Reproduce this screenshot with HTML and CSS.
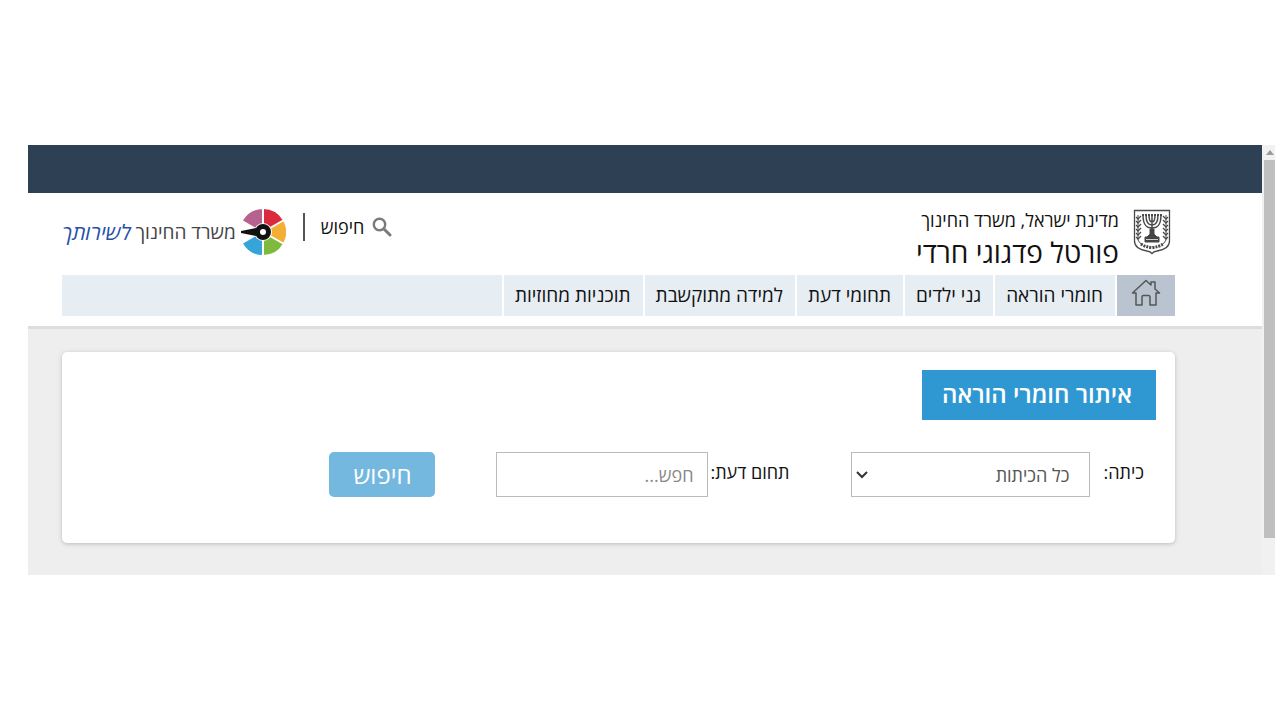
FILE: index.html
```html
<!DOCTYPE html>
<html lang="he" dir="rtl">
<head>
  <meta charset="UTF-8" />
  <meta name="viewport" content="width=device-width, initial-scale=1.0"/>
  <title>פורטל פדגוגי חרדי</title>
  <link rel="stylesheet" href="styles.css">
</head>
<body>
  <div class="frame">
    <div class="scrollbar">
      <div class="scroll-arrow"></div>
      <div class="scroll-thumb"></div>
    </div>

    <div class="page">
      <div class="top-bar"></div>

      <header class="header">
        <div class="brand-row">
          <svg class="emblem" viewBox="0 0 38 46" fill="none" stroke="#4a4a4a">
            <path d="M1.500 1.500H36.500V32C36.500 38 30 41 24 42Q20.500 42.500 19 44.500Q17.500 42.500 14 42C8 41 1.500 38 1.500 32Z" stroke-width="1.300"/>
            <path d="M10 6C10 17 14 19 19 19S28 17 28 6M13 6C13 13 15 16 19 16S25 13 25 6M16 6C16 10 17 13 19 13S22 10 22 6M19 6V27" stroke-width="1.500"/>
            <path d="M9 6H29" stroke-width="2" stroke-dasharray="2 1"/>
            <path d="M17 20H21V25L24 28H26V33H12V28H14L17 25Z" fill="#444"/>
            <path d="M13 30.500H25" stroke="#ccc"/>
            <path d="M5 6V31Q6 34 10 36M33 6V31Q32 34 28 36" stroke-width="1"/>
            <path d="M3 8L5 10L8 7M3 12L5 14L8 11M3 16L5 18L8 15M3 20L5 22L8 19M3 24L5 26L8 23M3 28L5 30L8 27M30 7L33 10L35 8M30 11L33 14L35 12M30 15L33 18L35 16M30 19L33 22L35 20M30 23L33 26L35 24M30 27L33 30L35 28" stroke-width="1.300"/>
            <path d="M8 35Q12 38 19 38.500Q26 38 30 35" stroke-width="3" stroke-dasharray="2 1"/>
          </svg>
          <div class="titles">
            <p class="subtitle">מדינת ישראל, משרד החינוך</p>
            <h1>פורטל פדגוגי חרדי</h1>
          </div>
          <a class="search-link" href="#">
            <svg class="search-icon" viewBox="0 0 20 20" fill="none" stroke="#7b7b7b">
              <circle cx="7.500" cy="7.500" r="5.700" stroke-width="2.400"/>
              <path d="M12 12L18 18" stroke-width="3" stroke-linecap="round"/>
            </svg>
            <span>חיפוש</span>
          </a>
          <a class="ministry" href="#">
            <svg class="ministry-icon" viewBox="0 0 45 48">
              <path d="M22 24V1A23 23 0 0 1 42 12.500Z" fill="#d92b3c"/>
              <path d="M22 24L42 12.500A23 23 0 0 1 42 35.500Z" fill="#f4ae35"/>
              <path d="M22 24L42 35.500A23 23 0 0 1 22 47Z" fill="#7fba3f"/>
              <path d="M22 24V47A23 23 0 0 1 2 35.500Z" fill="#35a5d9"/>
              <path d="M22 24L2 12.500A23 23 0 0 1 22 1Z" fill="#b7618f"/>
              <path d="M22 0V48M22 24L43 12M22 24L43 36" stroke="#fff" stroke-width="2"/>
              <circle cx="22" cy="24" r="9" fill="#fff"/>
              <path d="M0 23L15 20V28L0 25Z" fill="#111"/>
              <circle cx="22" cy="24" r="5.500" fill="#fff" stroke="#111" stroke-width="5"/>
            </svg>
            <span>משרד החינוך</span>
            <em>לשירותך</em>
          </a>
        </div>

        <nav class="nav">
          <a class="home" href="#" aria-label="דף הבית">
            <svg class="home-icon" viewBox="0 0 30 28" fill="none" stroke="#555" stroke-width="1.500" stroke-linejoin="round">
              <path d="M5 14H1.500L15 1.500L20 6V3H24V10L28.500 14H25V26H19V18Q19 16.500 17.500 16.500H12.500Q11 16.500 11 18V26H5Z"/>
            </svg>
          </a>
          <a href="#">חומרי הוראה</a>
          <a href="#">גני ילדים</a>
          <a href="#">תחומי דעת</a>
          <a href="#">למידה מתוקשבת</a>
          <a href="#">תוכניות מחוזיות</a>
          <div class="nav-rest"></div>
        </nav>
      </header>

      <main class="content">
        <section class="card">
          <h2>איתור חומרי הוראה</h2>
          <form class="filters">
            <div class="field">
              <label for="grade">כיתה:</label>
              <select id="grade">
                <option>כל הכיתות</option>
              </select>
            </div>
            <div class="field subject">
              <label for="subject">תחום דעת:</label>
              <input type="text" id="subject" placeholder="חפש..." />
            </div>
            <button type="button">חיפוש</button>
          </form>
        </section>
      </main>
    </div>
  </div>
</body>
</html>
```
FILE: styles.css
```css
* {
  box-sizing: border-box;
}

body {
  font-family: "Open Sans", "Noto Sans", "Liberation Sans", sans-serif;
  font-size: 18px;
  margin: 0;
  padding: 145px 5px 0 28px;
  background: #fff;
  color: #111;
}

h1, h2, p {
  margin: 0;
}

a {
  color: inherit;
  text-decoration: none;
}

.frame {
  display: flex;
}

.scrollbar {
  width: 13px;
  padding-left: 2px;
  background: #f1f1f1;
}

.scroll-arrow {
  height: 15px;
  display: flex;
  align-items: center;
  justify-content: center;
}

.scroll-arrow::before {
  content: "";
  border: 4px solid transparent;
  border-top: none;
  border-bottom: 5px solid #999;
}

.scroll-thumb {
  height: 378px;
  background: #bfbfbf;
}

.page {
  flex: 1;
  background: #eee;
}

.top-bar {
  height: 48px;
  background: #2d4054;
}

.header {
  padding: 15px 87px 10px 34px;
  background: #fff;
  box-shadow: 0 3px 0 #ddd;
}

.brand-row {
  display: flex;
  align-items: flex-start;
  height: 67px;
}

.emblem {
  width: 38px;
  height: 46px;
  margin: 1px 4px 0 14px;
}

.titles {
  flex: 1;
}

.subtitle {
  line-height: 24px;
}

h1 {
  font-size: 28px;
  font-weight: 400;
  line-height: 40px;
}

.search-link {
  display: flex;
  align-items: center;
  gap: 8px;
  height: 28px;
  margin-top: 5px;
  padding-left: 16px;
  border-left: 2px solid #555;
}

.search-icon {
  width: 20px;
  height: 20px;
}

.ministry {
  display: flex;
  align-items: center;
  gap: 5px;
  height: 48px;
  margin-right: 17px;
  font-size: 19px;
  color: #444;
}

.ministry-icon {
  width: 45px;
  height: 48px;
}

.ministry em {
  font-size: 21px;
  color: #2750a8;
}

.nav {
  display: flex;
  gap: 2px;
  height: 41px;
  font-size: 19px;
  line-height: 41px;
}

.nav a {
  padding: 0 12px 0 11px;
  background: #e6edf3;
}

.nav .home {
  display: flex;
  justify-content: center;
  width: 58px;
  padding-top: 4px;
  background: #b9c4d0;
}

.home-icon {
  width: 30px;
  height: 28px;
}

.nav-rest {
  flex: 1;
  background: #e6edf3;
}

.content {
  padding: 26px 87px 32px 34px;
}

.card {
  padding: 18px 19px 46px;
  border-radius: 5px;
  background: #fff;
  box-shadow: 0 1px 4px #bbb;
}

h2 {
  width: fit-content;
  padding: 0 24px 2px 20px;
  font-size: 24px;
  font-weight: 600;
  line-height: 48px;
  background: #2f98d2;
  color: #fff;
}

.filters {
  display: flex;
  align-items: center;
  gap: 61px;
  margin-top: 32px;
  padding-right: 12px;
}

.field {
  display: flex;
  align-items: center;
  gap: 14px;
}

.subject {
  gap: 2px;
}

label {
  padding-bottom: 6px;
}

select,
input[type="text"] {
  height: 45px;
  border: 1px solid #bbb;
  border-radius: 0;
  background: #fff;
  color: #555;
  font: inherit;
}

select {
  appearance: none;
  width: 239px;
  padding: 0 19px 0 24px;
  background: #fff url("data:image/svg+xml,%3Csvg xmlns='http://www.w3.org/2000/svg' width='12' height='8' fill='none' stroke='%23333' stroke-width='2'%3E%3Cpath d='M1 1l5 5 5-5'/%3E%3C/svg%3E") no-repeat 4px center;
}

input[type="text"] {
  width: 212px;
  padding: 0 14px;
}

input::placeholder {
  color: #888;
}

button {
  width: 106px;
  height: 45px;
  padding: 0;
  border: none;
  border-radius: 5px;
  background: #75b8df;
  color: #fff;
  font: inherit;
  font-size: 24px;
  cursor: pointer;
}
```
